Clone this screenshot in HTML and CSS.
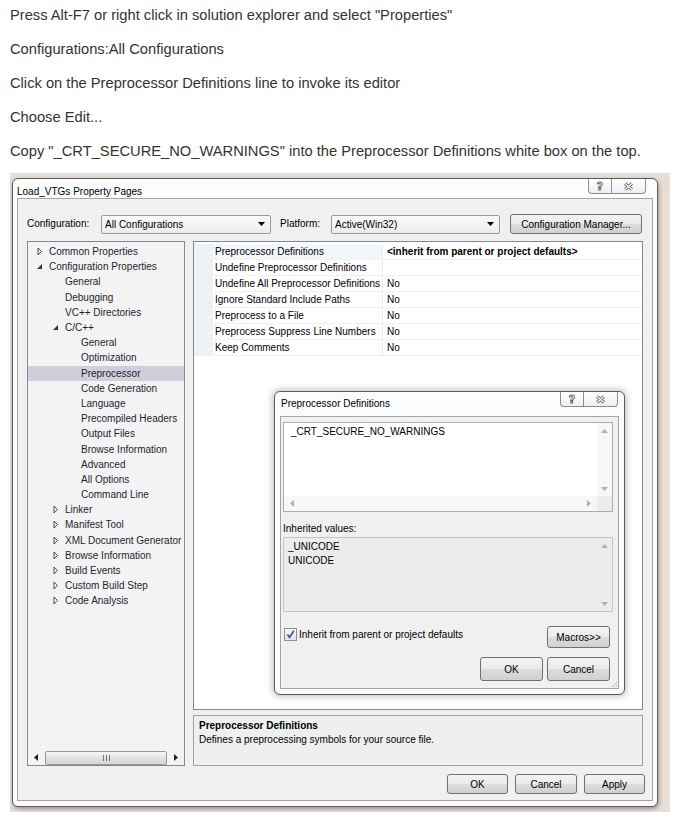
FILE: index.html
```html
<!DOCTYPE html>
<html>
<head>
<meta charset="utf-8">
<title>Preprocessor Definitions</title>
<link rel="stylesheet" href="styles.css">
</head>
<body>
<div class="steps">
  <p>Press Alt-F7 or right click in solution explorer and select "Properties"</p>
  <p>Configurations:All Configurations</p>
  <p>Click on the Preprocessor Definitions line to invoke its editor</p>
  <p>Choose Edit...</p>
  <p>Copy "_CRT_SECURE_NO_WARNINGS" into the Preprocessor Definitions white box on the top.</p>
</div>

<div class="shot">
  <div class="win">
    <div class="titlebar">
      <span class="title">Load_VTGs Property Pages</span>
      <div class="capbtns">
        <span class="cb help"><span class="q">?</span></span>
        <span class="cb close"><svg width="11" height="9" viewBox="0 0 11 9"><path d="M2 1.5L9 7.5M9 1.5L2 7.5" stroke="#6b6b6b" stroke-width="3"/><path d="M2 1.5L9 7.5M9 1.5L2 7.5" stroke="#fff" stroke-width="1.1"/></svg></span>
      </div>
    </div>

    <div class="client">
      <div class="cfgrow">
        <span class="lbl lbl-cfg">Configuration:</span>
        <div class="combo combo-cfg"><span>All Configurations</span><svg width="7" height="4" viewBox="0 0 7 4"><path d="M0 0H7L3.5 4Z" fill="#000"/></svg></div>
        <span class="lbl lbl-plat">Platform:</span>
        <div class="combo combo-plat"><span>Active(Win32)</span><svg width="7" height="4" viewBox="0 0 7 4"><path d="M0 0H7L3.5 4Z" fill="#000"/></svg></div>
        <span class="btn btn-mgr">Configuration Manager...</span>
      </div>

      <div class="main">
        <div class="tree">
          <ul>
            <li class="l0"><svg class="tw" viewBox="0 0 12 15"><path d="M1 4L4.5 7.5L1 11Z" fill="#fff" stroke="#4a4a4a"/></svg>Common Properties</li>
            <li class="l0"><svg class="tw" viewBox="0 0 12 15"><path d="M5 5V10H0Z" fill="#333"/></svg>Configuration Properties</li>
            <li class="l1"><span class="tw"></span>General</li>
            <li class="l1"><span class="tw"></span>Debugging</li>
            <li class="l1"><span class="tw"></span>VC++ Directories</li>
            <li class="l1"><svg class="tw" viewBox="0 0 12 15"><path d="M5 5V10H0Z" fill="#333"/></svg>C/C++</li>
            <li class="l2"><span class="tw"></span>General</li>
            <li class="l2"><span class="tw"></span>Optimization</li>
            <li class="l2 sel"><span class="tw"></span>Preprocessor</li>
            <li class="l2"><span class="tw"></span>Code Generation</li>
            <li class="l2"><span class="tw"></span>Language</li>
            <li class="l2"><span class="tw"></span>Precompiled Headers</li>
            <li class="l2"><span class="tw"></span>Output Files</li>
            <li class="l2"><span class="tw"></span>Browse Information</li>
            <li class="l2"><span class="tw"></span>Advanced</li>
            <li class="l2"><span class="tw"></span>All Options</li>
            <li class="l2"><span class="tw"></span>Command Line</li>
            <li class="l1"><svg class="tw" viewBox="0 0 12 15"><path d="M1 4L4.5 7.5L1 11Z" fill="#fff" stroke="#4a4a4a"/></svg>Linker</li>
            <li class="l1"><svg class="tw" viewBox="0 0 12 15"><path d="M1 4L4.5 7.5L1 11Z" fill="#fff" stroke="#4a4a4a"/></svg>Manifest Tool</li>
            <li class="l1"><svg class="tw" viewBox="0 0 12 15"><path d="M1 4L4.5 7.5L1 11Z" fill="#fff" stroke="#4a4a4a"/></svg>XML Document Generator</li>
            <li class="l1"><svg class="tw" viewBox="0 0 12 15"><path d="M1 4L4.5 7.5L1 11Z" fill="#fff" stroke="#4a4a4a"/></svg>Browse Information</li>
            <li class="l1"><svg class="tw" viewBox="0 0 12 15"><path d="M1 4L4.5 7.5L1 11Z" fill="#fff" stroke="#4a4a4a"/></svg>Build Events</li>
            <li class="l1"><svg class="tw" viewBox="0 0 12 15"><path d="M1 4L4.5 7.5L1 11Z" fill="#fff" stroke="#4a4a4a"/></svg>Custom Build Step</li>
            <li class="l1"><svg class="tw" viewBox="0 0 12 15"><path d="M1 4L4.5 7.5L1 11Z" fill="#fff" stroke="#4a4a4a"/></svg>Code Analysis</li>
          </ul>
          <div class="hscroll">
            <span class="sarrow"><svg width="4" height="7" viewBox="0 0 4 7"><path d="M4 0V7L0 3.5Z" fill="#222"/></svg></span>
            <span class="thumb"><svg width="7" height="6" viewBox="0 0 7 6"><path d="M0.5 0V6M3.5 0V6M6.5 0V6" stroke="#777"/></svg></span>
            <span class="sarrow"><svg width="4" height="7" viewBox="0 0 4 7"><path d="M0 0V7L4 3.5Z" fill="#222"/></svg></span>
          </div>
        </div>

        <div class="rightcol">
          <div class="grid">
            <div class="prow first"><span class="strip"></span><span class="pname">Preprocessor Definitions</span><span class="pval bold">&lt;inherit from parent or project defaults&gt;</span></div>
            <div class="prow"><span class="strip"></span><span class="pname">Undefine Preprocessor Definitions</span><span class="pval"></span></div>
            <div class="prow"><span class="strip"></span><span class="pname">Undefine All Preprocessor Definitions</span><span class="pval">No</span></div>
            <div class="prow"><span class="strip"></span><span class="pname">Ignore Standard Include Paths</span><span class="pval">No</span></div>
            <div class="prow"><span class="strip"></span><span class="pname">Preprocess to a File</span><span class="pval">No</span></div>
            <div class="prow"><span class="strip"></span><span class="pname">Preprocess Suppress Line Numbers</span><span class="pval">No</span></div>
            <div class="prow"><span class="strip"></span><span class="pname">Keep Comments</span><span class="pval">No</span></div>

            <div class="popup">
              <div class="ptitlebar">
                <span class="title">Preprocessor Definitions</span>
                <div class="capbtns pcap">
                  <span class="cb help phelp"><span class="q">?</span></span>
                  <span class="cb close pclose"><svg width="11" height="9" viewBox="0 0 11 9"><path d="M2 1.5L9 7.5M9 1.5L2 7.5" stroke="#6b6b6b" stroke-width="3"/><path d="M2 1.5L9 7.5M9 1.5L2 7.5" stroke="#fff" stroke-width="1.1"/></svg></span>
                </div>
              </div>
              <div class="pclient">
                <div class="editbox">
                  <div class="edittext">_CRT_SECURE_NO_WARNINGS</div>
                  <div class="vscroll">
                    <svg width="7" height="4" viewBox="0 0 7 4"><path d="M0 4H7L3.5 0Z" fill="#b0b0b0"/></svg>
                    <svg width="7" height="4" viewBox="0 0 7 4"><path d="M0 0H7L3.5 4Z" fill="#b0b0b0"/></svg>
                  </div>
                  <div class="hscroll2">
                    <svg width="4" height="7" viewBox="0 0 4 7"><path d="M4 0V7L0 3.5Z" fill="#b0b0b0"/></svg>
                    <svg width="4" height="7" viewBox="0 0 4 7"><path d="M0 0V7L4 3.5Z" fill="#b0b0b0"/></svg>
                  </div>
                  <div class="corner"></div>
                </div>
                <div class="inhlbl">Inherited values:</div>
                <div class="inhbox">
                  <div class="inhtext">_UNICODE<br>UNICODE</div>
                  <div class="vscroll vscroll-inh">
                    <svg width="7" height="4" viewBox="0 0 7 4"><path d="M0 4H7L3.5 0Z" fill="#b0b0b0"/></svg>
                    <svg width="7" height="4" viewBox="0 0 7 4"><path d="M0 0H7L3.5 4Z" fill="#b0b0b0"/></svg>
                  </div>
                </div>
                <div class="chkrow">
                  <span class="chk"><svg width="11" height="11" viewBox="0 0 11 11"><path d="M2.5 5.5L4.6 8.4L8.8 1.8" fill="none" stroke="#2f4f9e" stroke-width="1.6"/></svg></span>
                  <span class="chklbl">Inherit from parent or project defaults</span>
                  <span class="btn btn-macros">Macros&gt;&gt;</span>
                </div>
                <div class="pbtns">
                  <span class="btn btn-pok">OK</span>
                  <span class="btn btn-pcancel">Cancel</span>
                </div>
              </div>
              <svg class="grip" width="7" height="7" viewBox="0 0 7 7"><path d="M6 1L1 6M6 3.5L3.5 6M6 5.5L5.5 6" stroke="#9a9a9a" stroke-dasharray="1 1"/></svg>
            </div>
          </div>
          <div class="desc">
            <div class="bold">Preprocessor Definitions</div>
            <div>Defines a preprocessing symbols for your source file.</div>
          </div>
        </div>
      </div>

      <div class="footer">
        <span class="btn btn-ok">OK</span>
        <span class="btn btn-cancel">Cancel</span>
        <span class="btn btn-apply">Apply</span>
      </div>
    </div>
  </div>
</div>
</body>
</html>
```

FILE: styles.css
```css
body {
  margin: 0;
  background: #fff;
  font-family: "Liberation Sans", Arial, sans-serif;
}

.steps {
  padding: 7px 0 0 10px;
  font-family: "Liberation Sans", Arial, sans-serif;
  font-size: 14.7px;
  color: #333;
}
.steps p {
  margin: 0 0 18px;
  line-height: 16px;
  white-space: nowrap;
}
.steps p:last-child { margin-bottom: 0; }

.shot {
  margin: 14px 0 0 10px;
  width: 660px;
  height: 639px;
  box-sizing: border-box;
  padding: 5px 0 0 2px;
  background: #e9ded6;
  font-size: 10px;
  color: #000;
}

.win {
  width: 646px;
  height: 629px;
  box-sizing: border-box;
  border: 1px solid #5c5c5c;
  border-radius: 6px;
  background: #fbfcfd;
  padding: 0 4px 5px 4px;
  display: flex;
  flex-direction: column;
  box-shadow: 1px 2px 4px rgba(0,0,0,0.35);
}

.titlebar {
  height: 19px;
  flex: none;
  display: flex;
  align-items: flex-start;
}
.title {
  line-height: 12px;
  margin-top: 7px;
  color: #000;
}
.capbtns {
  margin-left: auto;
  margin-right: 7px;
  display: flex;
}
.cb {
  height: 15px;
  box-sizing: border-box;
  border: 1px solid #8d8d8d;
  border-top: none;
  background: linear-gradient(#ffffff, #eef0f3);
  display: flex;
  align-items: center;
  justify-content: center;
}
.cb.help { width: 24px; border-radius: 0 0 0 4px; }
.cb.close { width: 34px; border-left: none; border-radius: 0 0 4px 0; }
.q {
  font-family: "DejaVu Sans", sans-serif;
  font-size: 11px;
  font-weight: bold;
  line-height: 11px;
  color: #fff;
  -webkit-text-stroke: 0.8px #5a5a5a;
}

.client {
  flex: 1;
  border: 1px solid #a5a5a5;
  background: #f0f0f0;
  padding: 15px 9px 0 9px;
}

.cfgrow {
  display: flex;
  align-items: center;
  height: 20px;
}
.lbl { line-height: 12px; }
.lbl-cfg { width: 74px; }
.lbl-plat { width: 51px; margin-left: 9px; }
.combo {
  height: 19px;
  box-sizing: border-box;
  border: 1px solid #9a9a9a;
  border-radius: 2px;
  background: linear-gradient(#fafafa, #ececec);
  display: flex;
  align-items: center;
  justify-content: space-between;
  padding: 0 5px 0 3px;
}
.combo-cfg { width: 170px; }
.combo-plat { width: 169px; }

.btn {
  box-sizing: border-box;
  border: 1px solid #707070;
  border-radius: 3px;
  background: linear-gradient(#f3f3f3 0%, #ebebeb 48%, #dddddd 52%, #d0d0d0 100%);
  display: flex;
  align-items: center;
  justify-content: center;
  color: #000;
}
.btn-mgr { width: 132px; height: 20px; margin-left: 10px; }

.main {
  display: flex;
  gap: 8px;
  margin-top: 7px;
}

.tree {
  width: 158px;
  height: 525px;
  box-sizing: border-box;
  border: 1px solid #828790;
  background: #f3f3f3;
  display: flex;
  flex-direction: column;
  color: #1e1e34;
}
.tree ul {
  list-style: none;
  margin: 0;
  padding: 2px 0 0;
  flex: 1;
  overflow: hidden;
}
.tree li {
  display: flex;
  align-items: center;
  height: 15.2px;
  white-space: nowrap;
}
.tree li.l0 { padding-left: 9px; }
.tree li.l1 { padding-left: 25px; }
.tree li.l2 { padding-left: 41px; }
.tree li.sel { background: #cfd0da; }
.tw {
  flex: none;
  width: 12px;
  height: 15px;
}

.hscroll {
  height: 15px;
  display: grid;
  grid-template-columns: 16px 1fr 16px;
  align-items: center;
}
.sarrow {
  display: flex;
  justify-content: center;
}
.thumb {
  height: 14px;
  box-sizing: border-box;
  border: 1px solid #989898;
  border-radius: 2px;
  background: linear-gradient(#f6f6f6, #e2e2e2 50%, #d6d6d6);
  display: flex;
  align-items: center;
  justify-content: center;
  margin: 0 1px;
}

.rightcol {
  width: 450px;
  display: flex;
  flex-direction: column;
  gap: 5px;
}

.grid {
  height: 469px;
  box-sizing: border-box;
  border: 1px solid #828790;
  background: #fff;
  position: relative;
  padding-top: 2px;
}
.prow {
  display: flex;
  height: 16px;
  box-sizing: border-box;
  border-bottom: 1px solid #f0f0f0;
  line-height: 15px;
  white-space: nowrap;
}
.strip {
  width: 19px;
  flex: none;
  background: #eef1f6;
}
.pname {
  width: 170px;
  flex: none;
  box-sizing: border-box;
  padding-left: 2px;
  border-right: 1px solid #ececec;
  overflow: hidden;
}
.prow.first .pname { background: #f3f6fb; }
.pval {
  padding-left: 4px;
  flex: 1;
}
.bold { font-weight: bold; }

.popup {
  position: absolute;
  left: 80px;
  top: 149px;
  width: 351px;
  height: 304px;
  box-sizing: border-box;
  border: 1px solid #5a5a5a;
  border-radius: 6px;
  background: #fbfcfd;
  padding: 0 5px 5px 5px;
  display: flex;
  flex-direction: column;
  box-shadow: 0 0 6px 2px rgba(0,0,0,0.22);
}
.ptitlebar {
  height: 24px;
  flex: none;
  display: flex;
  align-items: flex-start;
}
.ptitlebar .title { margin-left: 1px; margin-top: 6px; }
.pcap { margin-right: 1px; }
.phelp { width: 23px; }
.pclose { width: 38px; }

.pclient {
  flex: 1;
  border: 1px solid #a5a5a5;
  background: #f0f0f0;
  padding: 5px 0 0 2px;
}
.editbox {
  width: 330px;
  height: 90px;
  box-sizing: border-box;
  border: 1px solid #abadb3;
  background: #fff;
  display: grid;
  grid-template-columns: 1fr 15px;
  grid-template-rows: 1fr 15px;
}
.edittext {
  padding: 3px 0 0 7px;
  line-height: 12px;
}
.vscroll {
  background: #f7f7f7;
  display: flex;
  flex-direction: column;
  align-items: center;
  justify-content: space-between;
  padding: 6px 0 5px;
}
.hscroll2 {
  background: #f7f7f7;
  display: flex;
  align-items: center;
  justify-content: space-between;
  padding: 0 6px;
}
.corner { background: #ececec; }

.inhlbl {
  margin-top: 10px;
  line-height: 14px;
  height: 14px;
}
.inhbox {
  margin-top: 1px;
  width: 330px;
  height: 75px;
  box-sizing: border-box;
  border: 1px solid #c4c4c4;
  background: #ececec;
  display: flex;
}
.inhtext {
  flex: 1;
  padding: 2px 0 0 4px;
  line-height: 14px;
}
.vscroll-inh {
  width: 15px;
  background: #ececec;
}

.chkrow {
  margin-top: 14px;
  height: 22px;
  display: flex;
  align-items: flex-start;
  margin-right: 8px;
}
.chk {
  width: 13px;
  height: 13px;
  box-sizing: border-box;
  border: 1px solid #8e8f8f;
  background: linear-gradient(#f4f4f4, #e4e4e4);
  margin: 2px 0 0 1px;
  display: flex;
  align-items: center;
  justify-content: center;
}
.chklbl {
  margin: 2px 0 0 2px;
  line-height: 14px;
}
.btn-macros {
  margin-left: auto;
  width: 63px;
  height: 22px;
}
.pbtns {
  margin-top: 9px;
  display: flex;
  justify-content: flex-end;
  gap: 4px;
  margin-right: 8px;
}
.btn-pok, .btn-pcancel { width: 63px; height: 24px; }

.grip {
  position: absolute;
  right: 6px;
  bottom: 6px;
}

.desc {
  height: 51px;
  box-sizing: border-box;
  border: 1px solid #a0a0a0;
  background: #efefef;
  padding: 3px 0 0 5px;
  line-height: 14px;
}

.footer {
  display: flex;
  justify-content: flex-end;
  gap: 7px;
  margin: 8px -2px 0 0;
}
.footer .btn { height: 20px; }
.btn-ok { width: 61px; }
.btn-cancel { width: 62px; }
.btn-apply { width: 61px; }
```
